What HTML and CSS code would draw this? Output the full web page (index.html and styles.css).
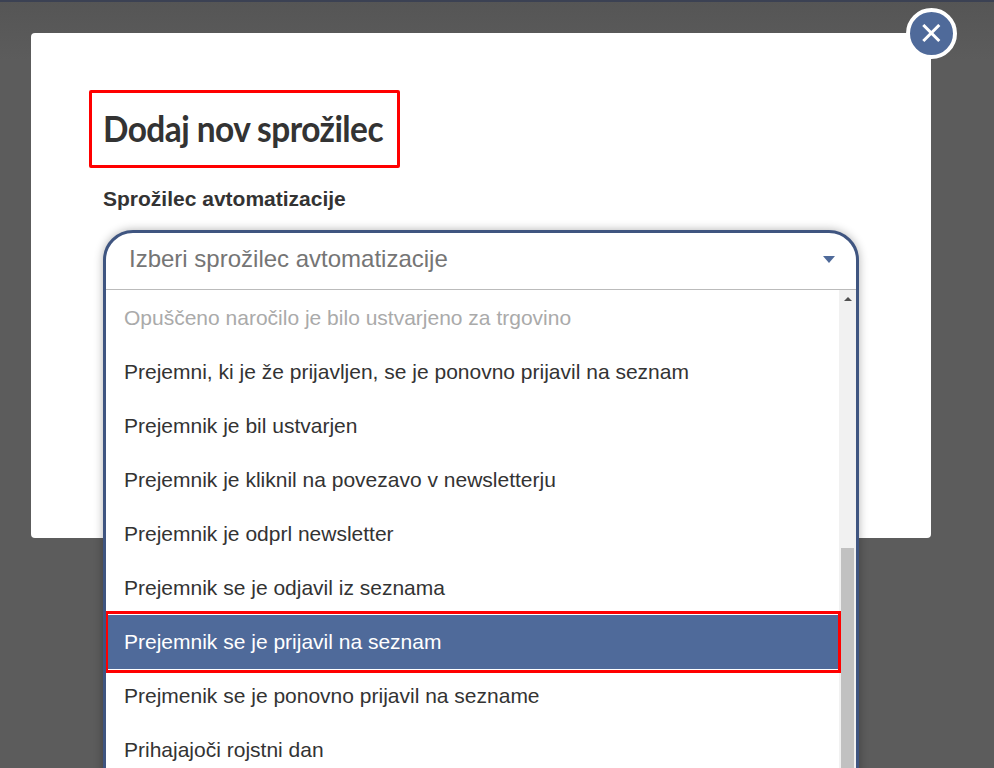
FILE: index.html
```html
<!DOCTYPE html>
<html lang="sl">
<head>
    <meta charset="UTF-8">
    <meta name="viewport" content="width=device-width, initial-scale=1.0">
    <title>Dodaj nov sprožilec</title>
    <link rel="stylesheet" href="styles.css">
</head>
<body>
<div class="modal">
    <button class="close-btn" type="button" aria-label="Zapri">
        <svg width="20" height="20" viewBox="0 0 20 20"><path d="M1.3 1 17.3 17M17.3 1 1.3 17" stroke="#fff" stroke-width="3" fill="none"/></svg>
    </button>
    <div class="title-box">
        <h2 class="modal-title">Dodaj nov sprožilec</h2>
    </div>
    <label class="field-label">Sprožilec avtomatizacije</label>
    <div class="select-box">
        <div class="select-head">
            <span class="select-placeholder">Izberi sprožilec avtomatizacije</span>
            <span class="select-arrow"></span>
        </div>
        <div class="select-body">
            <ul class="option-list">
                <li class="option disabled">Opuščeno naročilo je bilo ustvarjeno za trgovino</li>
                <li class="option">Prejemni, ki je že prijavljen, se je ponovno prijavil na seznam</li>
                <li class="option">Prejemnik je bil ustvarjen</li>
                <li class="option">Prejemnik je kliknil na povezavo v newsletterju</li>
                <li class="option">Prejemnik je odprl newsletter</li>
                <li class="option">Prejemnik se je odjavil iz seznama</li>
                <li class="option selected">Prejemnik se je prijavil na seznam</li>
                <li class="option">Prejmenik se je ponovno prijavil na sezname</li>
                <li class="option">Prihajajoči rojstni dan</li>
            </ul>
            <div class="scrollbar">
                <span class="scroll-up"></span>
                <div class="scroll-thumb"></div>
            </div>
        </div>
    </div>
</div>
</body>
</html>
```
FILE: styles.css
```css
html, body {
    height: 100%;
}
body {
    margin: 0;
    overflow: hidden;
    font-family: "Liberation Sans", Arial, sans-serif;
    color: #333;
    background: linear-gradient(to bottom, #555 0, #5c5c5c 60px);
    border-top: 2px solid #3b4153;
    box-sizing: border-box;
}
.modal {
    position: relative;
    box-sizing: border-box;
    width: 900px;
    height: 505px;
    margin: 31px 0 0 31px;
    padding: 57px 72px 0;
    background: #fff;
    border-radius: 4px;
}
.close-btn {
    position: absolute;
    top: -25px;
    right: -26px;
    display: flex;
    align-items: center;
    justify-content: center;
    width: 51px;
    height: 51px;
    padding: 0;
    background: #4f6a9a;
    border: 4px solid #fff;
    border-radius: 50%;
}
.title-box {
    box-sizing: border-box;
    width: 311px;
    height: 78px;
    margin-left: -14px;
    padding-left: 11px;
    border: 3px solid #f00;
    border-radius: 2px;
}
.modal-title {
    margin: 0;
    font-family: Lato, sans-serif;
    font-size: 36px;
    line-height: 70px;
    font-weight: 700;
    white-space: nowrap;
    letter-spacing: -0.6px;
    color: #333;
    transform: scaleX(0.93);
    transform-origin: left;
}
.field-label {
    display: block;
    margin-top: 19px;
    font-size: 21px;
    line-height: 24px;
    font-weight: 700;
}
.select-box {
    box-sizing: border-box;
    width: 756px;
    height: 700px;
    margin-top: 19px;
    background: #fff;
    border: 3px solid #3f5580;
    border-radius: 30px 30px 0 0;
    box-shadow: 0 0 10px rgba(0, 0, 0, 0.3);
    overflow: hidden;
}
.select-head {
    display: flex;
    align-items: center;
    justify-content: space-between;
    height: 57px;
    padding: 0 21px 4px 23px;
    box-sizing: border-box;
    border-bottom: 1px solid #bbb;
}
.select-placeholder {
    font-size: 24px;
    color: #757575;
}
.select-arrow {
    width: 0;
    height: 0;
    border-left: 6.5px solid transparent;
    border-right: 6.5px solid transparent;
    border-top: 7px solid #4f6a9a;
}
.select-body {
    display: flex;
}
.option-list {
    flex: 1;
    margin: 0;
    padding: 1px 0 0;
    list-style: none;
}
.option {
    box-sizing: border-box;
    height: 54px;
    padding-left: 18px;
    font-size: 21px;
    line-height: 54px;
    white-space: nowrap;
}
.option.disabled {
    color: #aaa;
}
.option.selected {
    position: relative;
    z-index: 1;
    background: #4f6a9a;
    color: #fff;
}
.option.selected::after {
    content: "";
    position: absolute;
    top: -4px;
    left: -1px;
    right: -2px;
    bottom: -4px;
    border: 3px solid #f00;
}
.scrollbar {
    position: relative;
    width: 17px;
    background: #f1f1f1;
}
.scroll-up {
    position: absolute;
    top: 7px;
    left: 5px;
    width: 0;
    height: 0;
    border-left: 4px solid transparent;
    border-right: 4px solid transparent;
    border-bottom: 4px solid #505050;
}
.scroll-thumb {
    width: 13px;
    height: 300px;
    margin: 258px 0 0 2px;
    background: #c1c1c1;
}
```
